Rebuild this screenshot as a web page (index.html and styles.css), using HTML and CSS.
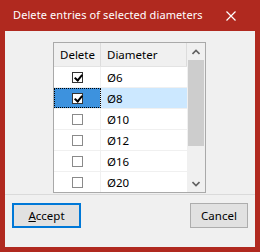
FILE: index.html
```html
<!DOCTYPE html>
<html lang="en">
<head>
  <meta charset="UTF-8" />
  <title>Delete entries of selected diameters</title>
  <link rel="stylesheet" href="styles.css">
</head>
<body>
  <div class="window">
    <div class="titlebar">
      <span class="title">Delete entries of selected diameters</span>
      <svg class="close" width="10" height="10" viewBox="0 0 10 10">
        <path d="M0.5 0.5 L9.5 9.5 M9.5 0.5 L0.5 9.5" stroke="#fff" stroke-width="1.2" fill="none"/>
      </svg>
    </div>

    <div class="client">
      <div class="grid-wrap">
        <div class="grid">
          <div class="table">
            <div class="row head">
              <div class="cell c-del">Delete</div>
              <div class="cell c-dia">Diameter</div>
            </div>
            <div class="row">
              <div class="cell c-del"><span class="check on"></span></div>
              <div class="cell c-dia">Ø6</div>
            </div>
            <div class="row selected">
              <div class="cell c-del"><span class="check on"></span></div>
              <div class="cell c-dia">Ø8</div>
            </div>
            <div class="row">
              <div class="cell c-del"><span class="check"></span></div>
              <div class="cell c-dia">Ø10</div>
            </div>
            <div class="row">
              <div class="cell c-del"><span class="check"></span></div>
              <div class="cell c-dia">Ø12</div>
            </div>
            <div class="row">
              <div class="cell c-del"><span class="check"></span></div>
              <div class="cell c-dia">Ø16</div>
            </div>
            <div class="row">
              <div class="cell c-del"><span class="check"></span></div>
              <div class="cell c-dia">Ø20</div>
            </div>
            <div class="row">
              <div class="cell c-del"><span class="check"></span></div>
              <div class="cell c-dia">Ø25</div>
            </div>
          </div>
          <div class="scrollbar">
            <div class="arrow">
              <svg width="8" height="6" viewBox="0 0 8 6"><path d="M0.5 5 L4 1.5 L7.5 5" stroke="#606060" stroke-width="1.6" fill="none"/></svg>
            </div>
            <div class="track"><div class="thumb"></div></div>
            <div class="arrow">
              <svg width="8" height="6" viewBox="0 0 8 6"><path d="M0.5 1 L4 4.5 L7.5 1" stroke="#606060" stroke-width="1.6" fill="none"/></svg>
            </div>
          </div>
        </div>
      </div>

      <div class="buttons">
        <button class="btn default"><u>A</u>ccept</button>
        <button class="btn">Cancel</button>
      </div>
    </div>
  </div>
</body>
</html>
```

FILE: styles.css
```css
body {
  margin: 0;
  padding: 0;
  font-family: 'Noto Sans', 'Open Sans', sans-serif;
  font-size: 11.5px;
  color: #000;
}

.window {
  width: 260px;
  height: 252px;
  background-color: #b0291f;
  box-sizing: border-box;
  padding: 0 5px 5px;
  display: flex;
  flex-direction: column;
}

.titlebar {
  height: 31px;
  display: flex;
  align-items: center;
  justify-content: space-between;
  padding: 0 19px 0 8px;
  color: #fff;
}

.title {
  font-size: 11px;
  letter-spacing: 0.1px;
  position: relative;
  top: -1px;
}

.client {
  flex: 1;
  background-color: #f0f0f0;
  display: flex;
  flex-direction: column;
}

.grid-wrap {
  padding: 11px 0 0 48px;
  height: 164px;
  box-sizing: border-box;
  border-bottom: 1px solid #dadada;
}

.grid {
  width: 153px;
  height: 151px;
  border: 1px solid #a9a9a9;
  box-sizing: border-box;
  background-color: #fff;
  display: flex;
  overflow: hidden;
}

.table {
  width: 133px;
}

.row {
  display: flex;
  height: 20px;
  border-bottom: 1px solid #f0f0f0;
}

.row.head {
  height: 23px;
  background-color: #f0f0f0;
  border-bottom: 1px solid #e3e3e3;
}

.cell {
  display: flex;
  align-items: center;
  box-sizing: border-box;
}

.c-del {
  width: 47px;
  justify-content: center;
  border-right: 1px solid #f0f0f0;
}

.c-dia {
  flex: 1;
  padding-left: 6px;
}

.head .c-del {
  border-right: 1px solid #dcdcdc;
  padding-left: 1px;
}

.head .c-dia {
  border-right: 1px solid #dcdcdc;
}

.selected .c-del {
  background-color: #3d92de;
  outline: 1px dotted #000;
  outline-offset: -1px;
}

.selected .c-dia {
  background-color: #cce8ff;
}

.check {
  width: 11px;
  height: 11px;
  box-sizing: border-box;
  border: 1px solid #8a8a8a;
  background-color: #fff;
  position: relative;
}

.check.on {
  border-color: #333;
}

.check.on::after {
  content: "";
  position: absolute;
  left: 3px;
  top: 0px;
  width: 3px;
  height: 6px;
  border: solid #000;
  border-width: 0 2px 2px 0;
  transform: rotate(40deg);
}

.scrollbar {
  width: 18px;
  background-color: #f0f0f0;
  display: flex;
  flex-direction: column;
}

.arrow {
  height: 17px;
  display: flex;
  align-items: center;
  justify-content: center;
}

.track {
  flex: 1;
  padding: 0 1px;
}

.thumb {
  height: 86px;
  background-color: #cdcdcd;
}

.buttons {
  display: flex;
  justify-content: space-between;
  padding: 8px 7px 0 7px;
}

.btn {
  height: 25px;
  font-family: 'Noto Sans', 'Open Sans', sans-serif;
  font-size: 11.5px;
  background-color: #e1e1e1;
  border: 1px solid #adadad;
  padding: 0;
  width: 58px;
  color: #000;
}

.btn.default {
  width: 69px;
  border: 2px solid #0078d7;
}
```
